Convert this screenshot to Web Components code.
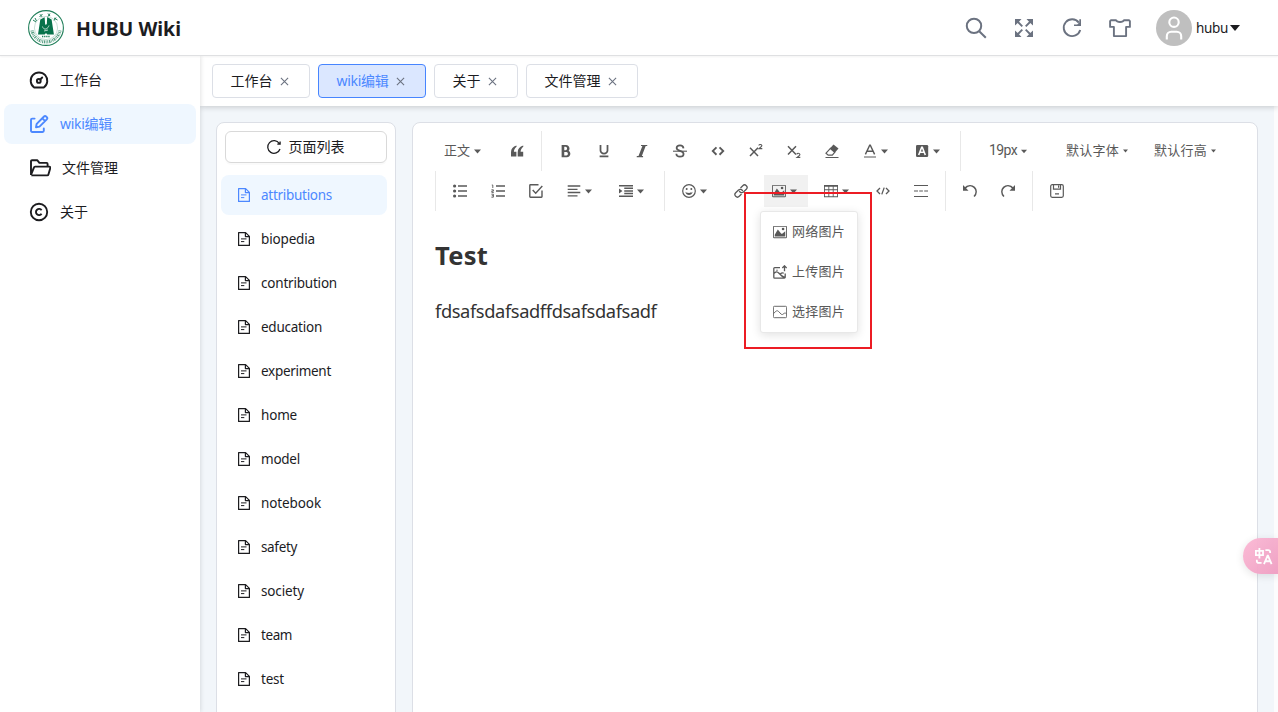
<!DOCTYPE html>
<html lang="zh-CN">
<head>
<meta charset="utf-8">
<title>HUBU Wiki</title>
<style>
html,body{margin:0;height:100%;overflow:hidden}
body{font:14px/20px "Noto Sans","Noto Sans CJK SC",sans-serif;color:#1c1c1f;background:#fff}
</style>
</head>
<body>
<wiki-app></wiki-app>
<script>
const ICONS = {
  search:['0 0 24 24','<g fill="none" stroke="currentColor" stroke-width="2"><circle cx="10" cy="9.9" r="7.2"/><path d="M15.2 15.2l6.6 6.6"/></g>'],
  expand:['0 0 24 24','<path d="M5 5l5.300 5.300M19 5l-5.300 5.300M19 19l-5.300-5.300M5 19l5.300-5.300" stroke="currentColor" stroke-width="1.900"/><path d="M3 3h6.500L7.700 4.900 4.900 7.700 3 9.500zM21 3h-6.500l1.800 1.900 2.800 2.800L21 9.500zM21 21h-6.500l1.800-1.900 2.800-2.800 1.900-1.800zM3 21h6.500l-1.800-1.900-2.800-2.800L3 14.500z"/>'],
  reload:['0 0 24 24','<path d="M18.800 6.600A8.400 8.400 0 1 0 20.200 14" fill="none" stroke="currentColor" stroke-width="1.900"/><path d="M21 3.200v6.800h-7V8.400h3.200l2.100-2V3.200z"/>'],
  shirt:['0 0 24 24','<path d="M3 4.200h5c1 2.400 7 2.400 8 0h5l.9.9v5.800h-3.800v9.200H5.900v-9.200H2.100V5.100z" fill="none" stroke="currentColor" stroke-width="1.9" stroke-linejoin="round"/>'],
  user:['0 0 24 24','<g fill="none" stroke="#fff" stroke-width="2.100"><circle cx="12" cy="6.200" r="4.700"/><path d="M4.800 23.400v-3.200a4.400 4.400 0 0 1 4.400-4.400h5.600a4.400 4.400 0 0 1 4.400 4.400v3.200"/></g>'],
  gauge:['0 0 20 20','<g fill="none" stroke="currentColor" stroke-width="1.9" stroke-linecap="round" stroke-linejoin="round"><path d="M5.2 17.5a8.3 8.3 0 1 1 9.6 0z"/><circle cx="9.8" cy="10.9" r="1.9"/><path d="M11.2 9.5l2-2"/></g>'],
  edit:['0 0 20 20','<g fill="none" stroke="currentColor" stroke-width="1.900" stroke-linecap="round" stroke-linejoin="round"><path d="M5.6 4.6H3.2A1.2 1.2 0 0 0 2 5.800v11a1.200 1.200 0 0 0 1.200 1.200h10.400a1.200 1.200 0 0 0 1.200-1.200v-2.400M7 13.300l.7-3.500 7.300-7.300a1.500 1.500 0 0 1 2.100 0l.7.7a1.500 1.500 0 0 1 0 2.100l-7.300 7.300zM13.400 4.300l2.500 2.500"/></g>'],
  folder:['0 0 22 20','<path d="M2 16.900V3.200a1 1 0 0 1 1-1h5.200l2.200 2.700h7.200a1 1 0 0 1 1 1v2.600M2 16.900l3-7.500a1.200 1.200 0 0 1 1.100-.8h14.200a1 1 0 0 1 1 1.300l-1.900 6.600a1.200 1.200 0 0 1-1.200.9H2.300" fill="none" stroke="currentColor" stroke-width="1.900" stroke-linejoin="round"/>'],
  copyright:['0 0 20 20','<g fill="none" stroke="currentColor" stroke-width="1.900"><circle cx="10" cy="10" r="8.200"/><path d="M12.600 8.200a3.100 3.100 0 1 0 0 3.600"/></g>'],
  close:['0 0 10 10','<path d="M1 1l8 8M9 1L1 9" stroke="currentColor" stroke-width="1.200"/>'],
  ring:['0 0 16 16','<path d="M13.300 4.500A6.300 6.300 0 1 0 14 10M14.100 2.500v2.700h-2.800" fill="none" stroke="currentColor" stroke-width="1.300"/>'],
  file:['0 0 14 16','<path d="M1.600 1.600h7l3.800 3.800v9H1.600zM8.400 1.600v4h4" fill="none" stroke="currentColor" stroke-width="1.200" stroke-linejoin="round"/><path d="M4 7.900h5.500M4 10.600h3.300" stroke="currentColor" stroke-width="1"/>'],
  caret:['0 0 10 6','<path d="M0 0h10L5 6z" fill="currentColor"/>'],
  quote:['0 0 14 14','<path d="M6.400 1.500C3 2.500 1 4.800 1 8.200v4.300h5.400V7.700H3.900c.1-2.200 1-3.800 2.700-5zM13.200 1.500C9.800 2.500 7.700 4.800 7.700 8.200v4.300h5.500V7.700h-2.600c.1-2.200 1-3.800 2.700-5z" fill="currentColor"/>'],
  bold:['0 0 1024 1024','<path fill="currentColor" d="M707.872 484.640A254.880 254.880 0 0 0 768 320c0-141.152-114.848-256-256-256H192v896h384c141.152 0 256-114.848 256-256a256.096 256.096 0 0 0-124.128-219.360zM384 192h101.504c55.968 0 101.504 57.408 101.504 128s-45.536 128-101.504 128H384V192z m159.008 640H384v-256h159.008c58.464 0 106.016 57.408 106.016 128s-47.552 128-106.016 128z"/>'],
  underline:['0 0 1024 1024','<path fill="currentColor" d="M704 64h128v416c0 159-143 288-320 288S192 639 192 480V64h128v416c0 40 18 79 51 108.500 37 33 87 51.500 141 51.500s104-18.500 141-51.500c33-29.500 51-68.500 51-108.500zM192 832h640v128H192z"/>'],
  italic:['0 0 1024 1024','<path fill="currentColor" d="M896 64v80H780L500 880h90v80H128v-80h128L540 144H440V64z"/>'],
  strike:['0 0 14 14','<path d="M10.500 4.400C10.300 2.500 9 1.400 7 1.400S3.600 2.500 3.600 4.100C3.600 5.700 5 6.300 7 6.900s3.600 1.400 3.600 3.100S9.200 12.700 7 12.700 3.400 11.600 3.300 9.700" fill="none" stroke="currentColor" stroke-width="1.700"/><path d="M0 7.200h14" stroke="currentColor" stroke-width="1.100"/>'],
  code:['0 0 1024 1024','<path fill="currentColor" d="M576 736l96 96 320-320L672 192l-96 96 224 224zM448 288l-96-96L32 512l320 320 96-96-224-224z"/>'],
  sup:['0 0 14 14','<path d="M1 3.800l8 8.200M9 3.800L1 12" stroke="currentColor" stroke-width="1.500"/><path d="M9.800 1.500q.2-1 1.500-1t1.600 1.100q0 .8-1.300 1.700L10 4.600H13.300" fill="none" stroke="currentColor" stroke-width="1.100"/>'],
  sub:['0 0 14 14','<path d="M1 2.300l8 8.200M9 2.300L1 10.500" stroke="currentColor" stroke-width="1.500"/><path d="M9.800 10.300q.2-1 1.500-1t1.600 1.100q0 .8-1.300 1.700L10 13.400H13.300" fill="none" stroke="currentColor" stroke-width="1.100"/>'],
  eraser:['0 0 14 14','<path d="M4.700 4.800L8.500.500 13.500 4.600 9.600 9z" fill="currentColor"/><path d="M5.900 3.800L1 9.200l2.200 1.900h4.100l2.800-3.200M.5 13.500h13" fill="none" stroke="currentColor" stroke-width="1.200"/>'],
  color:['0 0 14 14','<path d="M2.400 10.400L6.700 1.200h.6l4.300 9.200M4 7.200h6" fill="none" stroke="currentColor" stroke-width="1.400"/><path d="M1 13h12" stroke="currentColor" stroke-width="1"/>'],
  bg:['0 0 14 14','<rect x="1" y="1" width="12.200" height="12" rx="1.300" fill="currentColor"/><path d="M3.700 11L6.700 3.300h.6L10.300 11M4.800 8.300h4.400" fill="none" stroke="#fff" stroke-width="1.600"/>'],
  ul:['0 0 14 14','<path d="M5 2h9M5 7h9M5 12h9" stroke="currentColor" stroke-width="1.500"/><circle cx="1.600" cy="2" r="1.600"/><circle cx="1.600" cy="7" r="1.600"/><circle cx="1.600" cy="12" r="1.600"/>'],
  ol:['0 0 14 14','<path d="M5 2h9M5 7h9M5 12h9" stroke="currentColor" stroke-width="1.400"/><path d="M.8 1h1v3M.4 5.800h2v1.300H.8v1.300h2M.4 10.200h2v3H.400M.8 11.700h1.600" fill="none" stroke="currentColor" stroke-width=".9"/>'],
  check:['0 0 14 14','<path d="M9.500.8H1.400a.6.6 0 0 0-.6.6v11.200a.6.6 0 0 0 .6.6h11a.6.6 0 0 0 .6-.6V6.500M3.700 6l3 3.200L13.300 2" fill="none" stroke="currentColor" stroke-width="1.400"/>'],
  align:['0 0 14 14','<path d="M.7 2h12.600M.7 5.300h9.800M.7 8.500h12.600M.7 11.900h9.800" stroke="currentColor" stroke-width="1.300"/>'],
  indent:['0 0 1024 1024','<path fill="currentColor" d="M0 64h1024v110H0z m384 192h640v110H384z m0 192h640v110H384z m0 192h640v110H384zM0 840h1024v110H0z m0-150V330l250 180z"/>'],
  smile:['0 0 14 14','<circle cx="7" cy="7" r="6.300" fill="none" stroke="currentColor" stroke-width="1.200"/><circle cx="4.700" cy="5" r="1"/><circle cx="9.300" cy="5" r="1"/><path d="M3.400 7.700C4.700 9.300 9.300 9.300 10.600 7.700c-.6 4.400-6.600 4.400-7.200 0z"/>'],
  link:['0 0 14 14','<g transform="rotate(-45 7 7)" fill="none" stroke="currentColor" stroke-width="1.300"><path d="M5.200 9.500H2A2.500 2.500 0 0 1 2 4.500h4A2.500 2.500 0 0 1 8 8.300M8.800 4.500H12A2.500 2.500 0 0 1 12 9.500H8A2.500 2.500 0 0 1 6 5.700"/></g>'],
  image:['0 0 1024 1024','<path fill="currentColor" d="M960 128v768H64V128zM960 64H64C28.800 64 0 92.800 0 128v768c0 35.200 28.800 64 64 64h896c35.200 0 64-28.800 64-64V128c0-35.200-28.800-64-64-64zM832 288a96 96 0 1 1-192 0 96 96 0 0 1 192 0zM896 832H128V704l224-384 256 320h64l224-192z"/>'],
  table:['0 0 1024 1024','<path fill="currentColor" d="M0 64v896h1024V64H0z m384 576v-192h256v192H384z m256 64v192H384v-192h256z m0-512v192H384V192h256zM320 192v192H64V192h256z m-256 256h256v192H64v-192z m640 0h256v192h-256v-192z m0-64V192h256v192h-256zM64 704h256v192H64v-192z m640 192v-192h256v192h-256z"/>'],
  block:['0 0 14 14','<path d="M4 4L1 7l3 3M10 4l3 3-3 3M8.200 3.600L5.800 10.400" fill="none" stroke="currentColor" stroke-width="1.300"/>'],
  divider:['0 0 14 14','<path d="M0 1.500h14M0 12.500h14M0 7h4M5.200 7h3.700M10.200 7H14" stroke="currentColor" stroke-width="1.200"/>'],
  undo:['0 0 14 14','<path d="M1.500 4.600C5 .8 9 1.300 11.300 3.400c2.600 2.600 2.200 6.400-.2 9.200" fill="none" stroke="currentColor" stroke-width="1.600"/><path d="M0 1v5.700h5.500z"/>'],
  redo:['0 0 14 14','<path d="M12.500 4.600C9 .8 5 1.300 2.700 3.400c-2.600 2.600-2.200 6.400.2 9.200" fill="none" stroke="currentColor" stroke-width="1.600"/><path d="M14 1v5.700H8.500z"/>'],
  save:['0 0 14 14','<path d="M2.200.7h9.600a1.500 1.500 0 0 1 1.500 1.500v9.600a1.500 1.500 0 0 1-1.500 1.500H2.200A1.500 1.500 0 0 1 .7 11.800V2.200A1.500 1.500 0 0 1 2.200.7zM3.500.8v4.400h7V.8M8.600 1.500v2.200M5 9.800h4" fill="none" stroke="currentColor" stroke-width="1.200"/>'],
  upload:['0 0 14 14','<path d="M7 2.600H1.700a.9.900 0 0 0-.9.900v8.700a.9.900 0 0 0 .9.900h9.600a.9.900 0 0 0 .9-.9V8.500M.8 8.600c2-2.400 3.500-2.300 5.200-.4 1.900 2.200 3.500 3.500 5.900 4.500M7.500 8.800c1-1 2-1.400 3.300-.5" fill="none" stroke="currentColor" stroke-width="1.300"/><path d="M11.500 6.300V.8M9.300 3l2.200-2.200L13.700 3" fill="none" stroke="currentColor" stroke-width="1.300"/><circle cx="4" cy="5.300" r=".7"/>'],
  pick:['0 0 14 14','<path d="M1.400 1.300h11.200a1 1 0 0 1 1 1v9.400a1 1 0 0 1-1 1H1.400a1 1 0 0 1-1-1V2.300a1 1 0 0 1 1-1zM.6 8.500l2.300-2.200c1-.8 1.800-.7 2.700.2l2.500 2.600c.7.600 1.300.6 2 0l1-.7c.8-.5 1.500-.4 2.300.3" fill="none" stroke="currentColor" stroke-width=".9"/>'],
  translate:['0 0 20 20','<g fill="none" stroke="#fff" stroke-width="1.900"><path d="M2 4h7.500v4.500H2zM5.700 1v11M12 3.200h3a2 2 0 0 1 2 2v1M3 13.500v1.300a2 2 0 0 0 2 2h3M10.500 18l3.800-9h.4l3.800 9M12 15h5"/></g>']
};
const define = (name, render) => customElements.define(name, class extends HTMLElement {
  connectedCallback(){
    if (this.shadowRoot) return;
    this.attachShadow({mode:'open'}).innerHTML = render(this);
  }
});
const icon = (name, w=14, h=w) => `<ui-icon name="${name}" w="${w}" h="${h}"></ui-icon>`;

define('wiki-app', () => `<style>
:host{display:grid;grid-template:56px minmax(0,1fr)/200px minmax(0,1fr);height:100vh;position:relative;overflow:hidden}
app-header{grid-column:1/3;z-index:3}
main{display:flex;flex-direction:column;min-width:0;min-height:0;background:#f2f6fa;border-right:4px solid #fcfcfd}
tab-bar{margin-right:-4px;flex:none}
.work{flex:1;min-height:0;display:flex;gap:16px;padding:16px 16px 0}
.work>*{margin-bottom:-20px}
float-translate{position:absolute;right:0;top:538px;z-index:5}
</style><app-header></app-header><side-nav></side-nav><main><tab-bar></tab-bar><div class="work"><page-tree></page-tree><wiki-editor></wiki-editor></div></main><float-translate></float-translate>`);

define('app-header', () => `<style>
:host{display:flex;align-items:center;height:55px;border-bottom:1px solid #dfe0e2;background:#fff;padding:0 38px 0 28px;box-shadow:0 1px 2px #0000000d}
h1{margin:2px 0 0 12px;font:bold 19.500px/28px "Noto Sans",sans-serif}
.tools{display:flex;gap:24px;margin-left:auto;color:#6b7280}
.avatar{width:36px;height:36px;border-radius:50%;background:#bfbfbf;display:grid;place-items:center;margin:0 4px 0 24px}
.name{font-size:13.500px;margin-right:2px}
</style><hubu-seal></hubu-seal><h1><fit-text w="105">HUBU Wiki</fit-text></h1>
<div class="tools">${['search','expand','reload','shirt'].map(n=>icon(n,24)).join('')}</div>
<span class="avatar">${icon('user',24)}</span><fit-text class="name" w="32">hubu</fit-text>${icon('caret',10,6)}`);

define('hubu-seal', () => `<style>:host{display:block;width:36px;height:36px}svg{display:block}</style>
<svg width="36" height="36" viewBox="0 0 36 36" fill="none" stroke="#217f5a"><circle cx="18" cy="18" r="17.400" stroke-width="1.100"/><circle cx="18" cy="18" r="11.600" stroke-width=".5" stroke-opacity=".5"/>
<path d="M4 20.500a14.300 14.300 0 0 0 28 0" stroke-width="3.200" stroke-dasharray=".9 .8 1.400 .7 .6 .8" stroke-opacity=".75"/>
<path d="M5 10l3 2M7 8l1.500 3M12 4.300l2 2.500M14.500 4l-3 3M20 3.500l2 2.500M22 3.500L20 6.500M28 7.500l-2 3M26 8l3.500 2" stroke-width="1"/>
<path d="M12.300 9.500l4.300-2.200.6 7.500 1.600-.5.400-7.300 4.400 2.500 2.300 15.100h-6.700l-1.200-1.500-1.300 1.500H10z" fill="#08724b" stroke="none"/><path d="M14.500 16.500c.5 2 2 3 3.500 2.500s2.500-2 3-3.500M16 21l4-1" stroke="#fff" stroke-width=".7"/><path d="M14 26.600h8" stroke-width="1.500" stroke-dasharray="1.300 .8"/></svg>`);

define('side-nav', () => `<style>
:host{display:flex;flex-direction:column;gap:4px;padding:4px;background:#fff;box-shadow:1px 0 4px #0000001c;z-index:2}
</style><nav-item icon="gauge">工作台</nav-item><nav-item icon="edit" active w="52">wiki编辑</nav-item><nav-item icon="folder" iw="22">文件管理</nav-item><nav-item icon="copyright">关于</nav-item>`);
define('nav-item', e => `<style>
:host{display:flex;align-items:center;gap:11px;height:40px;padding-left:25px;border-radius:8px}
:host([active]){background:#eff7ff;color:#4c88ff}
</style>${icon(e.getAttribute('icon'), e.getAttribute('iw')||20, 20)}<fit-text w="${e.getAttribute('w')||''}">${e.textContent}</fit-text>`);

define('tab-bar', () => `<style>
:host{display:flex;align-items:center;gap:8px;height:50px;padding-left:12px;background:#fff;box-shadow:0 1px 6px #00000030}
</style><tab-chip style="width:98px">工作台</tab-chip><tab-chip active style="width:108px" w="52">wiki编辑</tab-chip><tab-chip style="width:84px">关于</tab-chip><tab-chip style="width:112px">文件管理</tab-chip>`);
define('tab-chip', e => `<style>
:host{display:flex;align-items:center;justify-content:center;gap:7px;box-sizing:border-box;height:34px;padding-right:3px;border:1px solid #dcdfe6;border-radius:4px}
:host([active]){background:#dbe7ff;border-color:#4785ff;color:#4c88ff}
ui-icon{color:#6b7280}
</style><fit-text w="${e.getAttribute('w')||''}">${e.textContent}</fit-text>${icon('close',9)}`);

const PAGES = [['attributions',71],['biopedia',54],['contribution',76],['education',61],['experiment',70],['home',36],['model',39],['notebook',60],['safety',36],['society',43],['team',31],['test',23]];
define('page-tree', () => `<style>
:host{display:block;box-sizing:border-box;width:180px;flex:none;border:1px solid #dcdfe6;border-radius:8px;background:#fff;padding:8px 8px 0 4px}
button{display:flex;align-items:center;justify-content:center;gap:7px;box-sizing:border-box;width:162px;height:32px;margin-left:4px;margin-bottom:12px;padding:0 2px 0 0;font:inherit;color:inherit;background:#fff;border:1px solid #d9d9d9;border-radius:6px;box-shadow:0 2px 0 #00000005}
.rows{display:flex;flex-direction:column;gap:4px}
</style><button>${icon('ring',16)}<span>页面列表</span></button><div class="rows">${PAGES.map(([p,w],i)=>`<tree-row ${i?'':'active'} w="${w}">${p}</tree-row>`).join('')}</div>`);
define('tree-row', e => `<style>
:host{display:flex;align-items:center;gap:10px;height:40px;padding-left:16px;border-radius:8px;font-size:13.500px}
:host([active]){background:#eff7ff;color:#4c88ff}
</style>${icon('file',14,16)}<fit-text w="${e.getAttribute('w')}">${e.textContent}</fit-text>`);

define('wiki-editor', () => `<style>
:host{display:block;flex:1;box-sizing:border-box;min-width:0;border:1px solid #dcdfe6;border-radius:8px;background:#fff;padding:8px 17px 0}
h2{font:bold 25.500px/36px "Noto Sans",sans-serif;color:#333;margin:26px 0 0 5px}
p{font-size:18.300px;line-height:28px;color:#333;margin:24px 0 0 5px}
</style><editor-toolbar></editor-toolbar><h2><fit-text w="53">Test</fit-text></h2><p><fit-text w="221.500">fdsafsdafsadffdsafsdafsadf</fit-text></p>`);

define('editor-toolbar', () => {
  const b = n => `<tool-button icon="${n}"></tool-button>`, m = n => `<tool-button icon="${n}" menu></tool-button>`, s = '<i></i>';
  return `<style>
:host{display:block;color:#595959;font-size:13px;position:relative}
.row{display:flex;height:40px;align-items:center}
i{width:1px;height:40px;background:#e8e8e8;margin:0 5px}
.sel{display:flex;align-items:center;gap:4px;box-sizing:border-box;height:40px;padding-bottom:2px}
.sel ui-icon{margin-top:2px}
.drop{position:relative;display:flex}
image-menu{position:absolute;left:0;top:36px;z-index:2}
.mark{position:absolute;box-sizing:border-box;left:-16px;top:17px;width:128px;height:157px;border:2px solid #ec1c24;z-index:3}
</style><div class="row"><span class="sel" style="width:68px;padding-left:14px">正文${icon('caret',7,5)}</span>${b('quote')}${s}${['bold','underline','italic','strike','code','sup','sub','eraser'].map(b).join('')}${m('color')}${m('bg')}${s}<span class="sel" style="width:100px;padding-left:23px"><fit-text style="font:14px Roboto" w="28">19px</fit-text>${icon('caret',6,5)}</span><span class="sel" style="width:88px"><fit-text w="53">默认字体</fit-text>${icon('caret',5,4)}</span><span class="sel"><fit-text w="53">默认行高</fit-text>${icon('caret',5,4)}</span></div>
<div class="row">${s}${['ul','ol','check'].map(b).join('')}${m('align')}${m('indent')}${s}${m('smile')}${b('link')}<span class="drop"><tool-button icon="image" menu active></tool-button><image-menu></image-menu><span class="mark"></span></span>${m('table')}${b('block')}${b('divider')}${s}${b('undo')}${b('redo')}${s}${b('save')}</div>`;
});
define('tool-button', e => `<style>
:host{display:flex;align-items:center;justify-content:center;gap:4px;box-sizing:border-box;width:38px;height:32px;border:0 solid transparent;border-width:0 4px;background-clip:padding-box;flex:none}
:host([menu]){width:52px;padding-right:4px}
:host([active]){background-color:#f1f1f1}
</style>${icon(e.getAttribute('icon'))}${e.hasAttribute('menu')?icon('caret',7,5):''}`);
define('image-menu', () => `<style>
:host{display:block;box-sizing:border-box;width:98px;height:122px;border:1px solid #e8e8e8;border-radius:3px;background:#fff;box-shadow:0 2px 10px #0000001f}
div{display:flex;align-items:center;gap:5px;height:40px;padding-left:12px;white-space:nowrap}
fit-text{margin-top:-2px}
</style><div>${icon('image')}<fit-text w="53">网络图片</fit-text></div><div>${icon('upload')}<fit-text w="53">上传图片</fit-text></div><div>${icon('pick')}<fit-text w="53">选择图片</fit-text></div>`);

define('float-translate', () => `<style>
:host{display:flex;align-items:center;box-sizing:border-box;width:35.500px;height:36px;padding-left:11px;border-radius:18px 0 0 18px;background:linear-gradient(135deg,#fbb9d4,#ef9dc2);opacity:.95;box-shadow:0 2px 8px #0000001c}
</style>${icon('translate',19)}`);

define('ui-icon', e => {
  const [box, body] = ICONS[e.getAttribute('name')];
  return `<style>:host{display:block;flex:none}svg{display:block}</style><svg width="${e.getAttribute('w')}" height="${e.getAttribute('h')}" viewBox="${box}" fill="currentColor">${body}</svg>`;
});

/* Label that spreads its letters over the advance width given in "w". */
customElements.define('fit-text', class extends HTMLElement {
  connectedCallback(){
    if (this.shadowRoot) return;
    this.attachShadow({mode:'open'}).innerHTML = '<style>:host{display:inline-block;white-space:nowrap}</style><slot></slot>';
    const w = +this.getAttribute('w');
    if (!w) return;
    const r = document.createRange();
    r.selectNodeContents(this);
    this.style.letterSpacing = (w - r.getBoundingClientRect().width) / this.textContent.length + 'px';
    this.style.width = w + 'px';
  }
});
</script>
</body>
</html>
